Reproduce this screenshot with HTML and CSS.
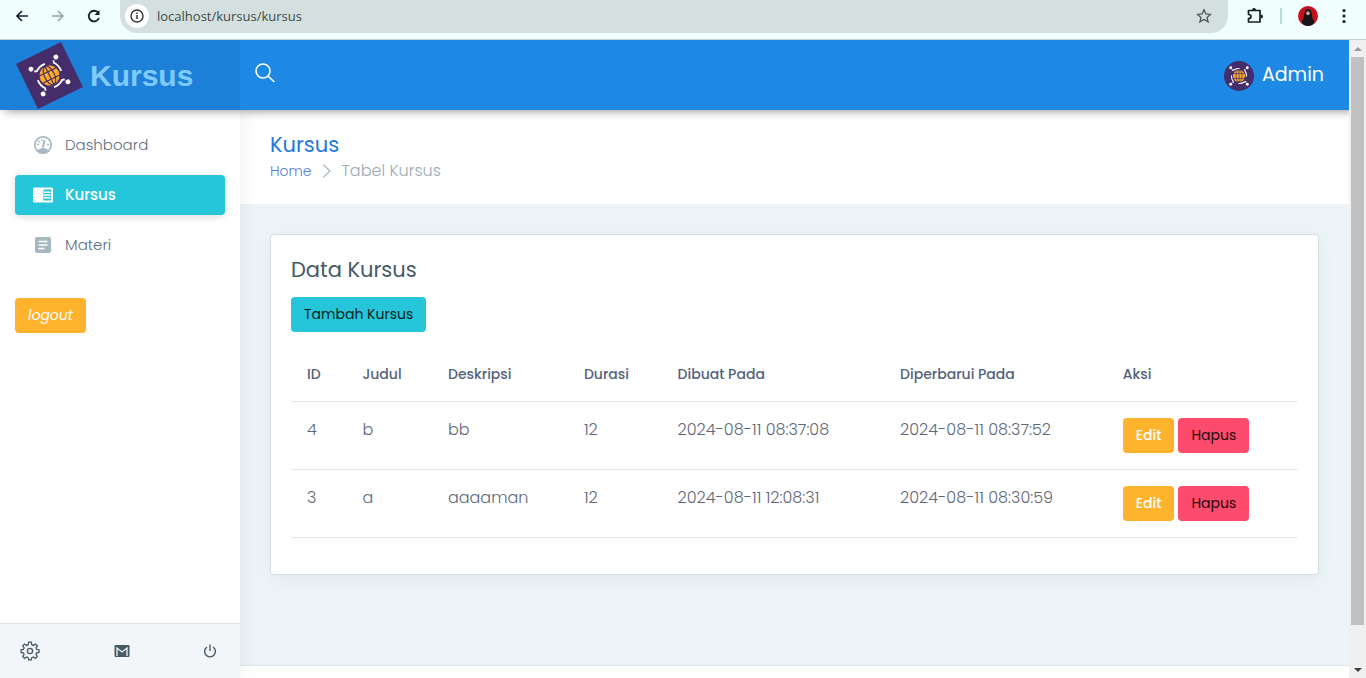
FILE: index.html
```html
<!DOCTYPE html>
<html lang="id">
<head>
<meta charset="utf-8">
<meta name="viewport" content="width=device-width, initial-scale=1">
<title>Kursus</title>
<link rel="stylesheet" href="styles.css">
</head>
<body>
<svg class="defs" aria-hidden="true">
  <symbol id="logo" viewBox="-25 -25 50 50" overflow="visible">
    <rect x="-25" y="-25" width="50" height="50" fill="#452d6b"/>
    <circle r="10" fill="#fbab26"/>
    <g fill="none" stroke="#452d6b" stroke-width="1.2"><ellipse rx="5" ry="10"/><path d="M-10 -4H10M-10 4H10M0 -10V10"/></g>
    <g id="arm"><circle cx="-13.8" cy="-13.8" r="2.4" fill="#fff"/><path d="M-12 -10.200L-9.500 -9.500Q-5 -13 1 -12.500" fill="none" stroke="#fff" stroke-width="1.800"/></g>
    <use href="#arm" transform="rotate(90)"/><use href="#arm" transform="rotate(180)"/><use href="#arm" transform="rotate(270)"/>
  </symbol>
</svg>

<div class="browser">
  <button class="browser-btn" aria-label="Back"><svg width="16" height="16" viewBox="0 0 16 16"><path d="M14 8H3M8 3L3 8l5 5" fill="none" stroke="#123" stroke-width="1.700"/></svg></button>
  <button class="browser-btn" aria-label="Forward"><svg width="16" height="16" viewBox="0 0 16 16"><path d="M2 8h11M8 3l5 5-5 5" fill="none" stroke="#95a3a3" stroke-width="1.500"/></svg></button>
  <button class="browser-btn" aria-label="Reload"><svg width="16" height="16" viewBox="0 0 16 16"><path d="M13 10A5.300 5.300 0 1 1 12 4.500" fill="none" stroke="#122" stroke-width="1.800"/><path d="M13.500 2v5h-5z" fill="#122"/></svg></button>
  <div class="address">
    <span class="address-info"><svg width="16" height="16" viewBox="0 0 16 16"><circle cx="8" cy="8" r="6" fill="none" stroke="#333" stroke-width="1.400"/><path d="M8 7v4M8 4.500v1.500" stroke="#333" stroke-width="1.500"/></svg></span>
    <input class="address-input" type="text" aria-label="Address" value="localhost/kursus/kursus">
    <button class="browser-btn" aria-label="Bookmark"><svg width="16" height="16" viewBox="0 0 16 16"><path d="M8 1.800l1.900 4.200 4.600.4-3.500 3 1.100 4.500L8 11.500l-4.100 2.400L5 9.400l-3.500-3 4.600-.4z" fill="none" stroke="#4c5655" stroke-width="1.300"/></svg></button>
  </div>
  <div class="browser-tools">
    <button class="browser-btn" aria-label="Extensions"><svg width="18" height="18" viewBox="0 0 18 18"><path d="M2.500 3.500h11.500v11.500H2.500v-3.500q2.500 0 2.500-2T2.500 7.500z" fill="none" stroke="#122" stroke-width="1.700" stroke-linejoin="round"/><path d="M6 3a2 2 0 0 1 4 0zM15 7.500a2 2 0 0 1 0 4z" fill="#122"/></svg></button>
    <span class="browser-line"></span>
    <button class="browser-btn" aria-label="Profile"><svg width="20" height="20" viewBox="0 0 20 20"><circle cx="10" cy="10" r="10" fill="#c8101c"/><path d="M10 3C6.500 3 6.500 7 6 10c-.4 3-2 4-2.500 6.500Q6 20 10 20t6.500-3.500C16 14 14.400 13 14 10c-.5-3-.5-7-4-7z" fill="#17131b"/><ellipse cx="10" cy="7.200" rx="1.700" ry="2" fill="#d9a993"/></svg></button>
    <button class="browser-btn" aria-label="Menu"><svg width="16" height="16" viewBox="0 0 16 16" fill="#122"><circle cx="8" cy="2.500" r="1.600"/><circle cx="8" cy="8" r="1.600"/><circle cx="8" cy="13.500" r="1.600"/></svg></button>
  </div>
</div>

<div class="viewport">
  <div class="app">
    <header class="topbar">
      <a class="brand" href="#"><svg width="67" height="67" viewBox="0 0 67 67"><g transform="rotate(-26 33.500 33.500)"><use href="#logo" x="8.500" y="8.500" width="50" height="50"/></g></svg><span>Kursus</span></a>
      <button class="search" aria-label="Cari"><svg width="20" height="20" viewBox="0 0 20 20" fill="none" stroke="#fff" stroke-width="1.600"><circle cx="8" cy="8" r="7"/><path d="M13 13l6.300 6"/></svg></button>
      <a class="user" href="#"><svg class="avatar" width="30" height="30"><use href="#logo" width="30" height="30"/></svg><span>Admin</span></a>
    </header>

    <div class="body">
      <aside class="sidebar">
        <nav class="nav">
          <a class="nav-link" href="#"><svg width="20" height="20" viewBox="0 0 20 20"><circle cx="10" cy="10" r="8.200" fill="none" stroke="#a6b7bf" stroke-width="1.700"/><path d="M4 15.500q2.500-2.500 6-2.500t6 2.500Q14 18.500 10 18.500T4 15.500zM10.500 5l2 .5-1.500 6.500q-1 1.300-2.200 0-.5-1.200.7-2z" fill="#a6b7bf"/><path d="M4 9.500h2M5.500 5.800l1.200 1.200M9 4.200v1.600M14 9.500h2" stroke="#a6b7bf" stroke-width="1.500"/></svg>Dashboard</a>
          <a class="nav-link nav-link-active" href="#" aria-current="page"><svg width="20" height="20" viewBox="0 0 20 20"><rect y="2.500" width="20" height="15" rx="1.500" fill="#fff"/><path d="M10.500 4.500H18v11h-7.500z" fill="#26c6da"/><path d="M11 7.300h6.500M11 10h6.500M11 12.700h6.500" stroke="#fff" stroke-width="1.400"/></svg>Kursus</a>
          <a class="nav-link" href="#"><svg width="20" height="20" viewBox="0 0 20 20"><rect x="2" y="2" width="16" height="16" rx="2" fill="#a6b7bf"/><path d="M5.500 6.500h9M5.500 10h9M5.500 13.500h6" stroke="#fff" stroke-width="1.600"/></svg>Materi</a>
        </nav>
        <button class="btn btn-warning logout">logout</button>
        <div class="sidebar-foot">
          <a href="#" aria-label="Pengaturan"><svg width="20" height="20" viewBox="0 0 20 20" fill="none" stroke="#455a64" stroke-width="1.300"><path d="M8.700 1.200h2.600l.5 2.500 1.700.7 2.100-1.400 1.800 1.800L16 6.900l.7 1.600 2.300.4v2.500l-2.400.5-.7 1.600 1.400 2-1.800 1.900-2.100-1.400-1.700.7-.4 2.200H8.700l-.5-2.300-1.600-.7-2.100 1.500-1.800-1.900 1.400-2-.7-1.600-2.400-.5V8.900l2.400-.4.700-1.600-1.400-2.100L4.500 3l2.100 1.400 1.600-.7z"/><circle cx="10" cy="10" r="2.600"/></svg></a>
          <a href="#" aria-label="Pesan"><svg width="16" height="16" viewBox="0 0 16 16"><rect x=".5" y="2" width="15" height="12" rx="1.300" fill="#455a64"/><path d="M3 13V5l5 4 5-4v8" fill="none" stroke="#f2f6f8" stroke-width="1.300"/></svg></a>
          <a href="#" aria-label="Keluar"><svg width="14" height="14" viewBox="0 0 14 14" fill="none" stroke="#455a64" stroke-width="1.400"><path d="M4 3A5.400 5.400 0 1 0 10 3M7 .5v6.500"/></svg></a>
        </div>
      </aside>

      <main class="main">
        <div class="page-head">
          <h1 class="page-title">Kursus</h1>
          <nav class="breadcrumb" aria-label="Breadcrumb"><a href="#">Home</a><svg width="10" height="14" viewBox="0 0 10 14"><path d="M1.500 .8L8 7l-6.500 6.200" fill="none" stroke="#a6b7bf" stroke-width="1.300"/></svg><span>Tabel Kursus</span></nav>
        </div>
        <div class="content">
          <section class="card">
            <h2 class="card-title">Data Kursus</h2>
            <button class="btn btn-info">Tambah Kursus</button>
            <table class="table">
              <colgroup><col class="c-id"><col class="c-title"><col class="c-desc"><col class="c-dur"><col class="c-date"><col class="c-date"><col></colgroup>
              <thead><tr><th>ID</th><th>Judul</th><th>Deskripsi</th><th>Durasi</th><th>Dibuat Pada</th><th>Diperbarui Pada</th><th>Aksi</th></tr></thead>
              <tbody>
                <tr><td>4</td><td>b</td><td>bb</td><td>12</td><td>2024-08-11 08:37:08</td><td>2024-08-11 08:37:52</td><td><div class="actions"><button class="btn btn-warning">Edit</button><button class="btn btn-danger">Hapus</button></div></td></tr>
                <tr><td>3</td><td>a</td><td>aaaaman</td><td>12</td><td>2024-08-11 12:08:31</td><td>2024-08-11 08:30:59</td><td><div class="actions"><button class="btn btn-warning">Edit</button><button class="btn btn-danger">Hapus</button></div></td></tr>
              </tbody>
            </table>
          </section>
        </div>
        <footer class="footer"></footer>
      </main>
    </div>
  </div>
  <div class="scrollbar" aria-hidden="true">
    <span class="arrow arrow-up"></span>
    <span class="track"><span class="thumb"></span></span>
    <span class="arrow arrow-down"></span>
  </div>
</div>
</body>
</html>
```

FILE: styles.css
```css
* { box-sizing: border-box; }
body {
  margin: 0;
  height: 100vh;
  display: flex;
  flex-direction: column;
  overflow: hidden;
  font-family: Poppins, Inter, sans-serif;
  font-size: 16px;
  font-weight: 300;
  line-height: 24px;
  color: #67757c;
}
a { color: inherit; text-decoration: none; }
svg { display: block; flex: none; }
h1, h2 { margin: 0; font-weight: 400; }
button { font: inherit; cursor: pointer; }
.defs { position: absolute; width: 0; height: 0; }

/* Browser toolbar */
.browser {
  flex: none;
  display: flex;
  align-items: center;
  gap: 20px;
  height: 40px;
  padding: 0 14px 7px;
  background: #f0fffe;
  border-bottom: 1px solid #c9d3d3;
}
.browser-btn { padding: 0; border: 0; background: none; }
.address {
  flex: 1;
  display: flex;
  align-items: center;
  height: 33px;
  margin-left: -2px;
  padding: 0 16px 0 5px;
  border-radius: 0 0 17px 17px;
  background: #d4e0df;
}
.address-info {
  display: grid;
  place-items: center;
  width: 24px;
  height: 24px;
  border-radius: 50%;
  background: #fff;
}
.address-input {
  flex: 1;
  margin: 0;
  padding: 0 8px;
  border: 0;
  outline: 0;
  background: none;
  color: #3f4948;
  font: 13px "Segoe UI", "Open Sans", sans-serif;
}
.browser-tools { display: flex; align-items: center; gap: 16px; margin-left: -2px; }
.browser-tools .browser-btn:nth-last-child(2) { margin-right: 2px; }
.browser-line { width: 2px; height: 16px; background: #b5dedb; }

/* Page frame */
.viewport { flex: 1; min-height: 0; display: flex; }
.app { flex: 1; min-width: 0; display: flex; flex-direction: column; }
.body { flex: 1; min-height: 0; display: flex; }

.topbar {
  position: relative;
  z-index: 2;
  flex: none;
  display: flex;
  align-items: center;
  height: 70px;
  background: #1e88e5;
  box-shadow: 5px 0 10px rgba(0, 0, 0, .5);
  clip-path: inset(0 0 -20px 0);
}
.brand {
  display: flex;
  align-items: center;
  gap: 7px;
  width: 240px;
  height: 70px;
  padding: 1px 0 0 16px;
  background: #1d80d8;
  color: #7fcbff;
  font: bold 30px/34px "Liberation Sans", Arial, sans-serif;
}
.search { margin: 0 auto 5px 15px; padding: 0; border: 0; background: none; }
.user {
  display: flex;
  align-items: center;
  gap: 8px;
  padding-right: 25px;
  color: #fff;
  font-size: 19px;
  font-weight: 400;
}
.avatar { margin-top: 2px; border-radius: 50%; }

/* Sidebar */
.sidebar {
  position: relative;
  z-index: 1;
  flex: none;
  display: flex;
  flex-direction: column;
  width: 240px;
  background: #fff;
  box-shadow: 1px 0 20px rgba(0, 0, 0, .08);
}
.nav { display: flex; flex-direction: column; gap: 10px; padding: 15px 15px 33px; }
.nav-link {
  display: flex;
  align-items: center;
  gap: 12px;
  height: 40px;
  padding: 0 18px;
  border-radius: 4px;
  color: #607080;
  font-size: 15px;
}
.nav-link-active {
  background: #26c6da;
  color: #fff;
  font-weight: 500;
  box-shadow: 0 2px 8px rgba(0, 0, 0, .14);
}
.logout { align-self: flex-start; margin-left: 15px; font-size: 15px; font-style: italic; }
.sidebar-foot {
  display: flex;
  align-items: center;
  justify-content: space-between;
  height: 55px;
  margin-top: auto;
  padding: 0 23px 0 20px;
  border-top: 1px solid #dde4e8;
  background: #f2f6f8;
}

/* Main column */
.main { flex: 1; min-width: 0; display: flex; flex-direction: column; background: #edf4f7; }
.page-head { padding: 20px 30px 22px; background: #fff; }
.page-title { color: #1e78dc; font-size: 21px; line-height: 30px; }
.breadcrumb { display: flex; align-items: center; gap: 10px; line-height: 22px; color: #99abb4; }
.breadcrumb a { color: #5580dd; font-size: 14px; }
.content { flex: 1; padding: 30px; }
.card {
  padding: 20px 20px 36px;
  border: 1px solid #d5dee2;
  border-radius: 4px;
  background: #fff;
  box-shadow: 0 5px 20px rgba(0, 0, 0, .05);
}
.card-title { margin-bottom: 12px; color: #455a64; font-size: 21px; line-height: 30px; }
.footer { height: 13px; border-top: 1px solid #dfe7eb; background: #fff; }

.btn {
  height: 35px;
  padding: 0 13px;
  border: 0;
  border-radius: 4px;
  font-size: 14px;
  font-weight: 400;
  line-height: 21px;
}
.btn-info { background: #26c6da; color: #061d20; }
.btn-warning { background: #ffb22b; color: #fff; }
.btn-danger { background: #fc4b6c; color: #240a10; }
.actions { display: flex; gap: 4px; }
.actions .btn-warning { font-weight: 500; }

.table { width: 100%; margin-top: 15px; border-collapse: collapse; table-layout: fixed; }
.table th, .table td {
  padding: 16px;
  border-bottom: 1px solid #e4e7ea;
  text-align: left;
  vertical-align: top;
  white-space: nowrap;
}
.table th { color: #55627a; font-size: 14px; font-weight: 500; line-height: 22px; }
.table td { color: #606779; }
.c-id { width: 5.5%; }
.c-title { width: 8.5%; }
.c-desc { width: 13.5%; }
.c-dur { width: 9.3%; }
.c-date { width: 22.1%; }

/* Scrollbar */
.scrollbar { flex: none; display: flex; flex-direction: column; width: 17px; background: #f0f0f0; }
.arrow { display: grid; place-items: center; height: 17px; }
.arrow::before { content: ""; border: 4px solid transparent; }
.arrow-up::before { border-top: 0; border-bottom-color: #999; }
.arrow-down::before { border-bottom: 0; border-top-color: #404040; }
.track { flex: 1; padding: 0 2px; }
.thumb { display: block; height: 94%; background: #c1c1c1; }
```
